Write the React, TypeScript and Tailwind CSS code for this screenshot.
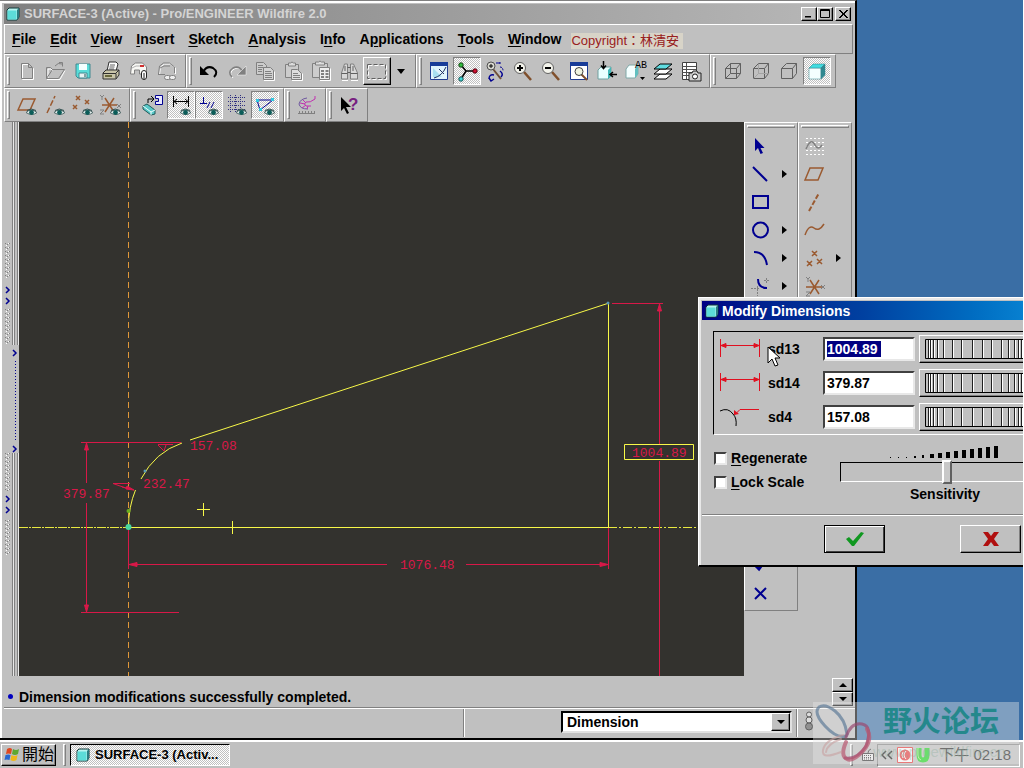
import type { ReactNode } from "react";
import clsx from "clsx";

const raised =
  "border border-t-white border-l-white border-r-black border-b-black shadow-[inset_-1px_-1px_0_#808080]";
const dither =
  "bg-[repeating-conic-gradient(#ffffff_0_25%,#c0c0c0_0_50%)] bg-[length:2px_2px]";

function Icon({ children }: { children: ReactNode }) {
  return (
    <svg
      viewBox="0 0 24 24"
      className="w-6 h-6 shrink-0"
      fill="none"
      stroke="#000"
      aria-hidden="true"
    >
      {children}
    </svg>
  );
}

function Eye() {
  return (
    <g>
      <path d="M11 19.5q5-5 11 0q-5 4-11 0z" fill="#dfeceb" stroke="#506868" />
      <circle cx="16.5" cy="19.5" r="2.4" fill="#0b5c58" stroke="none" />
      <path d="M12 17.5q4-3 9 0" stroke="#305050" />
    </g>
  );
}

function AppCube() {
  return (
    <svg viewBox="0 0 14 14" className="w-3.5 h-3.5 shrink-0" aria-hidden="true">
      <path d="M1 3l2-2h10v9l-2 3h-10z" fill="#b8f4f0" stroke="#103838" />
      <path d="M1.500 3.500h9v9h-9z" fill="#5cdcd8" />
      <path d="M11 3l2-2v9l-2 3z" fill="#2a7c80" />
    </svg>
  );
}

const grey = "#808080";
const brown = "#9a5a30";
const navy = "#000090";

const icons: Record<string, ReactNode> = {
  New: (
    <>
      <path d="M7.500 5.500h7l4 4v11h-11z" stroke="#fff" />
      <path d="M6.500 4.500h7l4 4v11h-11zM13.500 4.500v4h4" stroke={grey} />
    </>
  ),
  Open: (
    <>
      <path d="M4 20.500h13l5-9M5 20v-10h3l2 2" stroke="#fff" />
      <path d="M3.500 19.500h12l6-9h-12l-6 9v-11h4l2 2h6M12 7q3-4 7-2M16 3.500h3.500v4" stroke={grey} />
    </>
  ),
  Save: (
    <>
      <path d="M5 5h14v14h-12l-2-2z" fill="#58dcd8" stroke="#408890" />
      <path d="M8 5h8v6h-8z" fill="#f4ffff" stroke="none" />
      <path d="M8 14h8v5h-8z" fill="#e8f4f4" stroke="#408890" />
      <path d="M14 15v3" stroke="#205058" />
    </>
  ),
  Print: (
    <>
      <path d="M8 12l2-9h7l2 2-2 7" fill="#fff" stroke="#303030" />
      <path d="M11 6h5M10.500 8h5M10 10h5" stroke="#606060" />
      <path d="M4 14l3-3h13v5l-3 4h-13z" fill="#c8c4a8" stroke="#303030" />
      <path d="M4 14.500h13v5M17 14l3-3" stroke="#303030" />
      <path d="M6 17h7" stroke="#68683c" strokeWidth="2" />
    </>
  ),
  Mail: (
    <>
      <path d="M3.500 15l1-8 4-3h7l4 4v7h-7v-4h-5v4z" fill="#f8f8f4" stroke={grey} />
      <path d="M5 9l4-2h6" stroke="#b0b0b0" />
      <path d="M13 6h4v2h-4z" fill="#d03030" stroke="none" />
      <rect x="14.500" y="11.500" width="5" height="9" rx="2.500" fill="#fff" stroke="#202020" />
      <path d="M17 14v6" stroke="#202020" />
    </>
  ),
  Link: (
    <>
      <path d="M4.500 16l1-8 4-3h6l5 4v6" stroke="#fff" />
      <path d="M3.500 15l1-8 4-3h6l5 4v6M5 9l4-2h6M3 15.500h7" stroke={grey} />
      <rect x="9.500" y="16.500" width="6" height="4" rx="2" fill="#eee" stroke={grey} />
      <rect x="14.500" y="16.500" width="6" height="4" rx="2" fill="#eee" stroke={grey} />
    </>
  ),
  Undo: (
    <>
      <path d="M6 13q4-7 10-4q6 4 1 9" strokeWidth="2" />
      <path d="M3 7v9h9z" fill="#000" stroke="none" />
    </>
  ),
  Redo: (
    <>
      <path d="M19 14q-4-7-10-4q-6 4-1 9" stroke="#fff" />
      <path d="M18 13q-4-7-10-4q-6 4-1 9" stroke={grey} strokeWidth="1.500" />
      <path d="M21 7v9h-9z" fill={grey} stroke="#fff" strokeWidth="0.500" />
    </>
  ),
  Copy: (
    <>
      <path d="M3.500 3.500h7l3 3v9h-10z" fill="#ccc" stroke={grey} />
      <path d="M5 6.500h5M5 8.500h6M5 10.500h4M5 12.500h4" stroke={grey} />
      <path d="M10.500 8.500h7l3 3v9h-10z" fill="#d4d4d4" stroke={grey} />
      <path d="M12 12.500h6M12 14.500h7M12 16.500h7M12 18.500h7" stroke={grey} />
      <path d="M11 21.500h10.500v-9" stroke="#fff" />
    </>
  ),
  Paste: (
    <>
      <path d="M4.500 5.500h13v13h-13z" fill="#ccc" stroke={grey} />
      <path d="M7.500 7v-3h2q1.500-2 3 0h2v3z" fill="#ddd" stroke={grey} />
      <path d="M10.500 10.500h6l4 4v6h-10z" fill="#ddd" stroke={grey} />
      <path d="M12 14.500h5M12 16.500h7M12 18.500h7" stroke={grey} />
      <path d="M11 21.500h10.500v-7" stroke="#fff" />
    </>
  ),
  "Paste Special": (
    <>
      <path d="M3.500 4.500h15v14h-15z" fill="#ccc" stroke={grey} />
      <path d="M6.500 6v-3h3q1.500-2 3 0h3v3z" fill="#ddd" stroke={grey} />
      <path d="M10.500 8.500h10v12h-10z" fill="#eee" stroke={grey} />
      <path d="M12 12h3M16.500 12h3M12 15h3M16.500 15h3M12 18h3M16.500 18h3" stroke={grey} strokeWidth="2" />
      <path d="M11 21.500h10.500v-12" stroke="#fff" />
    </>
  ),
  Find: (
    <>
      <path d="M4.500 20v-6l3-9h3v15zM13.500 20v-15h3l4 9v6z" fill="#d8d8d8" stroke={grey} />
      <path d="M10.500 8.500h3M10.500 13.500h3M4.500 14.500h6M13.500 14.500h7M8 7v5M16 7v5" stroke="#606060" />
      <path d="M5 21.500h6M14 21.500h7" stroke="#fff" />
    </>
  ),
  Select: (
    <>
      <path d="M3.500 6.500h18v14h-18z" stroke="#fff" strokeDasharray="4 2" />
      <path d="M2.500 5.500h18v14h-18z" stroke="#606060" strokeDasharray="4 2" />
    </>
  ),
  Sketch: (
    <>
      <path d="M3.500 3.500h17v17h-17z" fill="#e0f4fc" stroke="#203c90" />
      <path d="M3 3h18v4h-18z" fill="#183c98" stroke="none" />
      <path d="M6 9l9 9h-9z" fill="#a8e0f0" stroke="none" />
      <path d="M7 19q8-2 12-11M12 10l5 5" stroke="#203060" />
    </>
  ),
  "Spin Center": (
    <>
      <path d="M6 6l5 6h9M11 12l-5 8" strokeWidth="1.500" />
      <circle cx="6" cy="6" r="2.200" fill="#30c040" stroke="#104010" />
      <circle cx="20" cy="12" r="2.200" fill="#d01030" stroke="#500010" />
      <circle cx="6" cy="20" r="2.200" fill="#40d8d8" stroke="#105050" />
    </>
  ),
  Orient: (
    <>
      <path d="M10 10l8 10" stroke="#705038" strokeWidth="2" />
      <circle cx="8" cy="7" r="4" fill="#d8d8d0" stroke="#505050" />
      <path d="M6 7h4M8 5v4" />
      <path d="M13 4h6M17 8q3 0 3 4M16 3v3" stroke={navy} strokeDasharray="2 1" />
      <path d="M6 20q0-5 5-4M11 20l-3 2-2-3M17 12q4 3 1 6" stroke={navy} strokeWidth="1.500" />
    </>
  ),
  "Zoom In": (
    <>
      <path d="M13 13l7 8" stroke="#80502c" strokeWidth="2.500" />
      <circle cx="9" cy="9" r="5.500" fill="#f4f4ec" stroke="#606060" />
      <path d="M6 9h6M9 6v6" strokeWidth="2" />
    </>
  ),
  "Zoom Out": (
    <>
      <path d="M13 13l7 8" stroke="#80502c" strokeWidth="2.500" />
      <circle cx="9" cy="9" r="5.500" fill="#f4f4ec" stroke="#606060" />
      <path d="M6 9h6" strokeWidth="2" />
    </>
  ),
  Refit: (
    <>
      <path d="M3.500 3.500h17v17h-17z" fill="#fff" stroke="#203c90" />
      <path d="M3 3h18v4h-18z" fill="#183c98" stroke="none" />
      <path d="M14 15l6 6" stroke="#80502c" strokeWidth="2" />
      <circle cx="12" cy="12.500" r="4" fill="#f0f4e0" stroke="#404040" />
    </>
  ),
  Reorient: (
    <>
      <path d="M3 11l3-3h10v9l-3 3h-10z" fill="#e8ffff" stroke="#70a0a0" />
      <path d="M13 11l3-3v9l-3 3z" fill="#40b8b8" stroke="none" />
      <path d="M8.500 2v7M6 6.500l2.500 3 2.500-3M22 15.500h-7M18 13l-3 2.500 3 2.500" strokeWidth="1.500" />
    </>
  ),
  "Saved View List": (
    <>
      <path d="M3 10l3-4h9v9l-3 4h-9z" fill="#f4ffff" stroke="#80a8a8" />
      <path d="M12 10l3-4v9l-3 4z" fill="#60c0c0" stroke="none" />
      <path d="M17 18h5l-2.500 3z" fill="#000" stroke="none" />
      <text x="12" y="9" fontSize="10" fontWeight="normal" fill="#000" stroke="none" fontFamily="Liberation Mono, monospace">
        AB
      </text>
    </>
  ),
  Layers: (
    <>
      <path d="M3 20l6-5h12l-6 5z" fill="#fff" />
      <path d="M3 15l6-5h12l-6 5z" fill="#fff" />
      <path d="M3 10l6-5h12l-6 5z" fill="#60dce0" />
    </>
  ),
  "View Manager": (
    <>
      <path d="M3.500 3.500h14v17h-14z" fill="#fff" stroke="#404040" />
      <path d="M3 7.500h14M3 10.500h14M3 13.500h14M3 16.500h14M7.500 4v16" stroke="#505050" />
      <path d="M10 14h3l1-2h4l1 2h3v8h-12z" fill="#ccc" stroke="#202020" />
      <circle cx="16" cy="17.500" r="2.500" fill="#fff" stroke="#202020" />
    </>
  ),
  Wireframe: (
    <path
      d="M4.500 9.500h11v10h-11zM9.500 4.500h10v10h-10zM4.500 9.500l5-5M15.500 9.500l4-5M4.500 19.500l5-5M15.500 19.500l4-5"
      stroke="#606060"
    />
  ),
  "Hidden Line": (
    <g stroke="#606060">
      <path d="M4.500 9.500h11v10h-11zM4.500 9.500l5-5h10v10l-4 5M15.500 9.500l4-5" />
      <path d="M9.500 5v9.500h10M9.500 14.500l-5 5" stroke="#a4a4a4" />
    </g>
  ),
  "No Hidden": (
    <path d="M4.500 9.500h11v10h-11zM4.500 9.500l5-5h10v10l-4 5M15.500 9.500l4-5" stroke="#606060" />
  ),
  Shading: (
    <g stroke="#308088" strokeWidth="0.500">
      <path d="M4 9h12v11h-12z" fill="#f4ffff" />
      <path d="M4 9l4-4h12l-4 4z" fill="#40dce0" />
      <path d="M16 9l4-4v11l-4 4z" fill="#308890" />
    </g>
  ),
  "Datum Planes": (
    <>
      <path d="M3 17l5-11h12l-5 11z" stroke={brown} strokeWidth="1.500" />
      <Eye />
    </>
  ),
  "Datum Axes": (
    <>
      <path d="M4 20l8-17" stroke={brown} strokeWidth="1.500" strokeDasharray="6 2" />
      <Eye />
    </>
  ),
  "Datum Points": (
    <>
      <path d="M5 3l4 4m0-4l-4 4M14 7l4 4m0-4l-4 4M2 12l4 4m0-4l-4 4" stroke={brown} strokeWidth="1.500" />
      <Eye />
    </>
  ),
  "Coordinate Systems": (
    <>
      <path d="M3 12h15M6 5l9 14M15 5l-9 14" stroke={brown} strokeWidth="1.500" />
      <path d="M1 2l2 2 2-2M3 4v3M1 17h4l-4 4h4M18 11l4 4m0-4l-4 4" stroke={grey} />
      <Eye />
    </>
  ),
  "Sketch Orientation": (
    <>
      <path d="M14.500 2.500h7v9h-7v-3h3v-3h-3z" stroke={navy} fill="#e8e8ff" />
      <path d="M7 10v-4h5M10 3l3 3-3 3" />
      <path d="M2 13l4-2 8 6v4l-4 1-8-6z" fill="#58c8c8" stroke="#205858" />
      <path d="M2 13l8 6 4-2M10 19v3" stroke="#f0ffff" />
    </>
  ),
  Dimensions: (
    <>
      <path d="M4.500 3v11M19.500 3v11M5 8.500h14M8 6l-3 2.500 3 2.500M16 6l3 2.500-3 2.500" />
      <Eye />
    </>
  ),
  Constraints: (
    <>
      <path d="M3 10.500h7M6.500 4v6M10 15l3-6M14 15l3-6" stroke={navy} />
      <Eye />
    </>
  ),
  Grid: (
    <>
      <path
        d="M3 4.500h18M3 8.500h18M3 12.500h18M3 16.500h18M5.500 2v18M10.500 2v18M15.500 2v18"
        stroke="#303080"
        strokeDasharray="1 1"
      />
      <Eye />
    </>
  ),
  Vertices: (
    <>
      <path d="M4 7h16M4 7l3 10 13-10" stroke={navy} />
      <path d="M3 6h3v3h-3zM18 5h3v3h-3zM6 15h3v3h-3z" fill="#30c8e0" stroke="none" />
      <Eye />
    </>
  ),
  Curvature: (
    <>
      <path d="M12 5q-7 1-8 6q1 5 9 5" stroke="#7058a0" />
      <path d="M20 3v3q-5 4-9 3q-3 2 0 4h5M8 7l3 3M5 10l5 1M7 15l4-3M12 16l1-3" stroke="#c030b0" />
      <path d="M3 20.500h17M4.500 18v2M7.500 18v2M10.500 18v2M13.500 18v2M16.500 18v2M19.500 18v2" stroke={grey} />
    </>
  ),
  "Context Help": (
    <>
      <path d="M4 4v14l3-3 3 6 2-1-3-6h5z" fill="#000" stroke="none" />
      <text x="11" y="17" fontSize="17" fontWeight="bold" fill="#782080" stroke="none" fontFamily="Liberation Sans, sans-serif">
        ?
      </text>
    </>
  ),
  Pointer: <path d="M7 4v13l3-3 2.500 6 2.500-1-2.500-5h4z" fill={navy} stroke="none" />,
  Line: <path d="M5 5l14 14" stroke={navy} strokeWidth="2" />,
  Rectangle: <path d="M5 6h15v12h-15z" stroke={navy} strokeWidth="2" />,
  Circle: <circle cx="12.500" cy="12" r="7.500" stroke={navy} strokeWidth="2" />,
  Arc: <path d="M6 6q11 0 13 13" stroke={navy} strokeWidth="2" />,
  Fillet: (
    <>
      <path d="M10 5q0 9 9 9" stroke={navy} strokeWidth="2" />
      <path d="M3 14.500h8M9.500 12v10M16 6.500h6M18.500 4v5" stroke={grey} strokeDasharray="2 1" />
    </>
  ),
  Done: <path d="M7 11l4 4 5-7" stroke={navy} strokeWidth="3" />,
  Quit: <path d="M7 6l11 11M18 6l-11 11" stroke={navy} strokeWidth="2" />,
  "Sketch Tool": (
    <>
      <path
        d="M4 4.500h18M4 8.500h18M4 12.500h18M4 16.500h18M4 20.500h18"
        stroke="#fff"
        strokeDasharray="2 2"
      />
      <path d="M4 15q5-12 9-4q3 6 7 0" stroke={grey} strokeWidth="1.500" />
    </>
  ),
  Plane: <path d="M3 18l5-12h13l-5 12z" stroke={brown} strokeWidth="1.500" />,
  Axis: <path d="M7 21l10-18" stroke={brown} strokeWidth="2" strokeDasharray="5 2" />,
  Curve: <path d="M3 17q4-11 9-7q5 4 10-4" stroke={brown} strokeWidth="1.500" />,
  Point: (
    <path d="M10 5l5 5m0-5l-5 5M5 15l5 5m0-5l-5 5M15 13l5 5m0-5l-5 5" stroke={brown} strokeWidth="1.500" />
  ),
  "Coordinate System": (
    <>
      <path d="M4 13h16M8 6l9 14M17 6l-9 14" stroke={brown} strokeWidth="1.500" />
      <path d="M4 3l2 2 2-2M6 5v3M4 18h4l-4 4h4M19 11l4 4m0-4l-4 4" stroke={grey} />
    </>
  ),
};

const pressed = ["Spin Center", "Shading", "Dimensions", "Constraints", "Vertices"];

function ToolButton({ name }: { name: string }) {
  return (
    <button
      type="button"
      aria-label={name}
      className={clsx(
        "w-7 h-7 flex items-center justify-center",
        pressed.includes(name) &&
          clsx(dither, "border border-t-[#808080] border-l-[#808080] border-r-white border-b-white"),
        name === "Select" && raised,
      )}
    >
      <Icon>{icons[name]}</Icon>
    </button>
  );
}

function ToolGroup({ items, children }: { items: string[]; children?: ReactNode }) {
  return (
    <div className="flex items-center pl-0.5 pr-1 border border-t-white border-l-white border-r-[#808080] border-b-[#808080]">
      <div className="w-[3px] h-7 mr-[3px] border border-t-white border-l-white border-r-[#808080] border-b-[#808080]" />
      {items.map((name) => (
        <ToolButton key={name} name={name} />
      ))}
      {children}
    </div>
  );
}

const menus = [
  ["", "F", "ile"],
  ["", "E", "dit"],
  ["", "V", "iew"],
  ["", "I", "nsert"],
  ["", "S", "ketch"],
  ["", "A", "nalysis"],
  ["I", "n", "fo"],
  ["A", "p", "plications"],
  ["", "T", "ools"],
  ["", "W", "indow"],
];

function SideTools({ items, flyouts, className }: { items: string[]; flyouts: string[]; className?: string }) {
  return (
    <div
      className={clsx(
        "w-[54px] pt-[2px] border border-t-white border-l-white border-r-[#808080] border-b-[#808080]",
        className,
      )}
    >
      <div className="h-[3px] mx-0.5 mb-1 border border-t-white border-l-white border-r-[#808080] border-b-[#808080]" />
      {items.map((name, i) => (
        <div key={i} className="h-7 flex items-center pl-[3px]">
          {name && (
            <button type="button" aria-label={name}>
              <Icon>{icons[name]}</Icon>
            </button>
          )}
          {flyouts.includes(name) && (
            <svg viewBox="0 0 5 8" className="ml-2.5 w-[5px] h-2" aria-hidden="true">
              <path d="M0 0l5 4-5 4z" />
            </svg>
          )}
        </div>
      ))}
    </div>
  );
}

function Sash() {
  return (
    <svg
      viewBox="4 122 15 554"
      preserveAspectRatio="xMinYMin slice"
      className="w-[15px] h-full shrink-0"
      fill="none"
      aria-hidden="true"
    >
      <path d="M12.500 122v554M14.500 122v554M17.500 122v554" stroke="#808080" />
      <path d="M13.500 122v554M18.500 122v554" stroke="#e8e8e8" />
      <path d="M12 345h7v108h-7z" fill="#c0c0c0" />
      <path
        d="M5.500 243v36M7.500 244v35M9.500 243v36M5.500 309v36M7.500 310v35M9.500 309v36M5.500 453v38M7.500 454v37M9.500 453v38M5.500 520v36M7.500 521v35M9.500 520v36"
        stroke="#808080"
        strokeDasharray="1 3"
      />
      <path
        d="M6.500 245v34M8.500 243v36M6.500 311v34M8.500 309v36M6.500 455v36M8.500 453v38M6.500 522v34M8.500 520v36"
        stroke="#fff"
        strokeDasharray="1 3"
      />
      <path d="M15.500 361v80" stroke={navy} strokeDasharray="1 2" />
      <path
        d="M6 287l3 3-3 3M6 298l3 3-3 3M13 350l3 3-3 3M13 446l3 3-3 3M6 496l3 3-3 3M6 507l3 3-3 3"
        stroke={navy}
        strokeWidth="1.500"
      />
    </svg>
  );
}

function SketchCanvas() {
  return (
    <div className="flex-1 min-w-0 bg-[#33322e] overflow-hidden">
      <svg
        viewBox="19 122 725 554"
        preserveAspectRatio="xMinYMin slice"
        className="block w-full h-full"
        fill="none"
      >
        <path d="M128.500 122v554" stroke="#e09838" strokeDasharray="6 4" />
        <path d="M19 527.500h109" stroke="#e8e840" strokeDasharray="9 1 2 1" />
        <path d="M608 527.500h136" stroke="#e8e840" strokeDasharray="9 2 2 2" />

        <g stroke="#d81848">
          <path d="M81 442.500h100M86.500 443v40M86.500 503v109M81 612.500h98" />
          <path d="M128.500 528v41M129 564.500h258M466 564.500h142M608.500 528v41" />
          <path d="M612 303.500h51M659.500 304v140M659.500 461v215" />
          <path d="M113 483.500h17M113 483.500l17 6M122 487l12 3M158 444.500h15M158 445l6 6 2-6" />
          <path d="M138 527.500h10" />
          <g fill="#d81848">
            <path d="M84.500 450l2-7 2 7zM84.500 605l2 7 2-7z" />
            <path d="M129 564.500l8-2v4zM608 564.500l-8-2v4z" />
            <path d="M657.500 311l2-7 2 7zM134 490l-7-4-1 3z" />
          </g>
        </g>

        <g stroke="#f8f848">
          <path d="M190 440L609 303M608.500 303v224M128 527.500h481" />
          <path d="M128.500 527q0-20 7-37M141 479q14-27 41-36" />
          <path d="M197 509.500h13M203.500 503v13M232.500 521v13" />
          <path d="M624.500 444.500h69v15h-69z" />
        </g>
        <circle cx="128.500" cy="527" r="3" fill="#48d8a0" />
        <circle cx="128.500" cy="511" r="2" fill="#68b020" />
        <circle cx="145" cy="471" r="1.500" fill="#5898b8" />
        <circle cx="608" cy="303" r="1.500" fill="#5898b8" />

        <g
          fill="#d81848"
          fontFamily="Liberation Mono, monospace"
          fontSize="13"
          fontWeight="normal"
        >
          <text x="190" y="450">157.08</text>
          <text x="143" y="488">232.47</text>
          <text x="63" y="498">379.87</text>
          <text x="400" y="569">1076.48</text>
          <text x="632" y="457">1004.89</text>
        </g>
      </svg>
    </div>
  );
}

function TitleButton({ label, path }: { label: string; path: string }) {
  return (
    <button type="button" aria-label={label} className={clsx("w-4 h-3.5 bg-[#c0c0c0]", raised)}>
      <svg viewBox="0 0 14 12" className="w-3.5 h-3" fill="none" stroke="#000" aria-hidden="true">
        <path d={path} />
      </svg>
    </button>
  );
}

function MainWindow() {
  return (
    <main className="h-full flex flex-col bg-[#c0c0c0] border-t border-t-[#808080] border-r-2 border-r-black border-b-2 border-b-black">
      <div className="flex-1 min-h-0 flex flex-col border-t-2 border-l-2 border-white pt-px pl-0.5">
        <header className="h-5 mr-0.5 px-0.5 flex items-center gap-1 bg-linear-to-r from-[#808080] to-[#b8b8b8]">
          <AppCube />
          <h1 className="text-[13px] text-[#d4d4d4] whitespace-nowrap">
            SURFACE-3 (Active) - Pro/ENGINEER Wildfire 2.0
          </h1>
          <div className="ml-auto flex">
            <TitleButton label="Minimize" path="M3 9h6M3 8.500h6" />
            <TitleButton label="Maximize" path="M2.500 1.500h9v8h-9zM2 2.500h9" />
            <div className="ml-0.5 flex">
              <TitleButton label="Close" path="M3 2l8 8M4 2l8 8M11 2l-8 8M12 2l-8 8" />
            </div>
          </div>
        </header>

        <nav className="h-[30px] mr-0.5 pl-[7px] flex items-center gap-3.5 border border-t-white border-l-white border-r-[#808080] border-b-[#808080]">
          {menus.map(([before, key, after]) => (
            <button type="button" key={key + after}>
              {before}
              <u className="underline-offset-2">{key}</u>
              {after}
            </button>
          ))}
          <span className="-ml-1 mt-1 pr-1 leading-4 text-[13px] font-normal text-[#982020] bg-[#d8d4c8] whitespace-nowrap">
            Copyright：林清安
          </span>
        </nav>

        <div className="h-[34px] flex">
          <ToolGroup items={["New", "Open", "Save", "Print", "Mail", "Link"]} />
          <ToolGroup items={["Undo", "Redo", "Copy", "Paste", "Paste Special", "Find", "Select"]}>
            <button type="button" aria-label="Selection filter" className="w-5 flex justify-center">
              <svg viewBox="0 0 8 5" className="w-2 h-[5px]" aria-hidden="true">
                <path d="M0 0h8l-4 5z" />
              </svg>
            </button>
          </ToolGroup>
          <ToolGroup
            items={[
              "Sketch",
              "Spin Center",
              "Orient",
              "Zoom In",
              "Zoom Out",
              "Refit",
              "Reorient",
              "Saved View List",
              "Layers",
              "View Manager",
            ]}
          />
          <ToolGroup items={["Wireframe", "Hidden Line", "No Hidden", "Shading"]} />
        </div>
        <div className="h-[34px] flex">
          <ToolGroup items={["Datum Planes", "Datum Axes", "Datum Points", "Coordinate Systems"]} />
          <ToolGroup items={["Sketch Orientation", "Dimensions", "Constraints", "Grid", "Vertices"]} />
          <ToolGroup items={["Curvature"]} />
          <ToolGroup items={["Context Help"]} />
        </div>

        <div className="flex-1 min-h-0 flex pr-[3px]">
          <Sash />
          <SketchCanvas />
          <div className="flex items-start">
            <SideTools
              items={["Pointer", "Line", "Rectangle", "Circle", "Arc", "Fillet", "", "", "", "", "", "", "", "", "", "Done", "Quit"]}
              flyouts={["Line", "Circle", "Arc", "Fillet"]}
              className="pb-0.5"
            />
            <SideTools
              items={["Sketch Tool", "Plane", "Axis", "Curve", "Point", "Coordinate System"]}
              flyouts={["Point"]}
              className="pb-10"
            />
          </div>
        </div>

        <div className="h-8 pl-1 pr-0.5 flex items-center justify-between border-b border-b-[#808080]">
          <p className="pt-2.5 flex items-center gap-1.5">
            <span className="w-[5px] h-[5px] rounded-full bg-[#0000c0]" />
            Dimension modifications successfully completed.
          </p>
          <div className="flex flex-col">
            <button type="button" aria-label="Scroll up" className={clsx("w-[21px] h-3.5 flex items-center justify-center", raised)}>
              <svg viewBox="0 0 8 4" className="w-2 h-1" aria-hidden="true">
                <path d="M0 4h8l-4-4z" />
              </svg>
            </button>
            <button type="button" aria-label="Scroll down" className={clsx("w-[21px] h-3.5 flex items-center justify-center", raised)}>
              <svg viewBox="0 0 8 4" className="w-2 h-1" aria-hidden="true">
                <path d="M0 0h8l-4 4z" />
              </svg>
            </button>
          </div>
        </div>

        <div className="h-[30px] flex items-start border-t border-t-white">
          <div className="flex-1 h-7 border-r border-r-[#808080]" />
          <div className="h-7 pl-24 pr-1 pt-0.5 border-l border-l-white border-r border-r-[#808080]">
            <div className="relative">
              <select
                aria-label="Selection filter"
                defaultValue="Dimension"
                className="block appearance-none w-[231px] h-[22px] pl-1 leading-4 bg-white border-2 border-t-black border-l-black border-r-[#e0e0e0] border-b-[#e0e0e0]"
              >
                <option>Dimension</option>
              </select>
              <span className={clsx("absolute right-0.5 top-0.5 w-[19px] h-[18px] flex items-center justify-center bg-[#c0c0c0] pointer-events-none", raised)}>
                <svg viewBox="0 0 8 4" className="w-2 h-1" aria-hidden="true">
                  <path d="M0 0h8l-4 4z" />
                </svg>
              </span>
            </div>
          </div>
          <div className="h-7 w-[58px] pl-1.5 pt-0.5 border-l border-l-white">
            <svg viewBox="0 0 10 20" className="w-2.5 h-5" stroke="#606060" aria-hidden="true">
              <circle cx="5" cy="3.500" r="2.500" fill="#ddd" />
              <circle cx="5" cy="9" r="3" fill="#ddd" />
              <circle cx="5" cy="15.500" r="3.500" fill="#909090" />
            </svg>
          </div>
        </div>
      </div>
    </main>
  );
}

function LinearIcon() {
  return (
    <svg viewBox="0 0 40 20" className="w-10 h-5 shrink-0" fill="none" stroke="#e01020" aria-hidden="true">
      <path d="M0.500 0v18M39.500 0v18M1 6.500h38" />
      <path d="M1 6.500l5-2v4zM39 6.500l-5-2v4z" fill="#e01020" />
    </svg>
  );
}

function RadialIcon() {
  return (
    <svg viewBox="0 0 40 20" className="w-10 h-5 shrink-0" fill="none" aria-hidden="true">
      <path d="M0 4q8-4 13 3q4 4 3 12" stroke="#000" />
      <path d="M39 2.500h-19l-5 5" stroke="#e01020" />
      <path d="M14 8v-5l5 4z" fill="#e01020" />
    </svg>
  );
}

const wheelLines = [3, 5, 8, 12, 18, 27, 36, 47, 57, 66, 76, 83, 89, 93, 96, 99];

function Thumbwheel({ label }: { label: string }) {
  return (
    <button type="button" aria-label={label} className={clsx("w-[112px] h-7 shrink-0 pl-[5px]", raised)}>
      <svg viewBox="0 0 106 20" className="w-[106px] h-5" fill="none" aria-hidden="true">
        {wheelLines.map((x) => (
          <g key={x}>
            <path d={`M${x + 0.5} 1v18`} stroke="#202020" />
            <path d={`M${x + 1.5} 1v18`} stroke="#fff" />
          </g>
        ))}
        <path d="M0.500 0.500h105v19h-105z" stroke="#000" />
      </svg>
    </button>
  );
}

const dimensions = [
  { name: "sd13", value: "1004.89", icon: <LinearIcon /> },
  { name: "sd14", value: "379.87", icon: <LinearIcon /> },
  { name: "sd4", value: "157.08", icon: <RadialIcon /> },
];

const bars = [1, 1, 1, 2, 3, 4, 5, 6, 7, 8, 9, 10, 11, 12];

function ModifyDimensions() {
  return (
    <section
      aria-label="Modify Dimensions"
      className="absolute left-[698px] right-0 top-[297px] h-[270px] flex flex-col overflow-hidden bg-[#c0c0c0] border-t border-l border-white border-b-2 border-b-black pt-[3px] pl-[3px] shadow-[inset_2px_2px_0_#e8e8e8]"
    >
      <header className="h-[19px] shrink-0 px-[3px] flex items-center gap-[3px] bg-linear-to-r from-[#000084] via-[#0040a0] to-[#0880d0] text-white">
        <AppCube />
        <h2>Modify Dimensions</h2>
      </header>

      <div className="mt-[11px] ml-[11px] border border-t-black border-l-black border-b-white border-r-0">
        {dimensions.map(({ name, value, icon }) => (
          <div key={name} className="h-[34px] pl-1.5 flex items-center">
            {icon}
            <label htmlFor={name} className="w-[63px] shrink-0 pl-2 leading-4">
              {name}
            </label>
            <div className="w-[92px] h-6 shrink-0 mr-1 flex items-center bg-white border-2 border-t-[#404040] border-l-[#404040] border-r-[#e8e8e8] border-b-[#e8e8e8]">
              <input
                id={name}
                defaultValue={value}
                className={clsx(
                  "h-4 ml-0.5 outline-none",
                  name === "sd13" ? "w-[54px] bg-[#000080] text-white" : "w-20",
                )}
              />
            </div>
            <Thumbwheel label={`${name} wheel`} />
          </div>
        ))}
      </div>

      <div className="mt-[11px] pl-3 flex">
        <div className="w-[126px] shrink-0">
          {["Regenerate", "Lock Scale"].map((text) => (
            <label key={text} className="h-6 flex items-center gap-1 whitespace-nowrap">
              <input
                type="checkbox"
                className="appearance-none w-[13px] h-[13px] bg-white border-2 border-t-[#404040] border-l-[#404040] border-r-[#e8e8e8] border-b-[#e8e8e8]"
              />
              <span>
                <u className="underline-offset-2">{text[0]}</u>
                {text.slice(1)}
              </span>
            </label>
          ))}
        </div>
        <div className="w-[210px] shrink-0 flex flex-col">
          <svg viewBox="0 0 210 12" className="w-[210px] h-3" aria-hidden="true">
            {bars.map((h, i) => (
              <rect key={i} x={50 + i * 8} y={12 - h} width={h > 3 ? 4 : h > 1 ? 2 : 1} height={h} />
            ))}
          </svg>
          <input
            id="sensitivity"
            type="range"
            min="0"
            max="100"
            defaultValue="51"
            className="mt-0.5 h-6 appearance-none bg-transparent [&::-webkit-slider-runnable-track]:h-5 [&::-webkit-slider-runnable-track]:border [&::-webkit-slider-runnable-track]:border-black [&::-webkit-slider-runnable-track]:border-b-white [&::-webkit-slider-thumb]:appearance-none [&::-webkit-slider-thumb]:w-2.5 [&::-webkit-slider-thumb]:h-6 [&::-webkit-slider-thumb]:-mt-[3px] [&::-webkit-slider-thumb]:bg-[#c8c8c8] [&::-webkit-slider-thumb]:border-2 [&::-webkit-slider-thumb]:border-t-white [&::-webkit-slider-thumb]:border-l-white [&::-webkit-slider-thumb]:border-r-[#606060] [&::-webkit-slider-thumb]:border-b-[#606060]"
          />
          <label htmlFor="sensitivity" className="text-center leading-5">
            Sensitivity
          </label>
        </div>
      </div>

      <footer className="mt-2.5 pt-2.5 pl-[122px] flex gap-[75px] border-t border-t-[#808080] shadow-[inset_0_1px_0_#fff]">
        <button
          type="button"
          aria-label="Accept"
          className="w-[61px] h-7 shrink-0 flex items-center justify-center border border-black shadow-[inset_1px_1px_0_#fff,inset_-1px_-1px_0_#404040]"
        >
          <svg viewBox="0 0 18 14" className="w-[18px] h-3.5" aria-hidden="true">
            <path d="M0 7l3-2 4 4 8-9 3 1-10 13h-2z" fill="#109820" />
          </svg>
        </button>
        <button type="button" aria-label="Cancel" className={clsx("w-[61px] h-7 shrink-0 flex items-center justify-center", raised)}>
          <svg viewBox="0 0 16 14" className="w-4 h-3.5" aria-hidden="true">
            <path d="M0 0h5l3 4 3-4h5l-5 7 5 7h-5l-3-4-3 4h-5l5-7z" fill="#b01010" />
          </svg>
        </button>
      </footer>

      <svg viewBox="0 0 14 22" className="absolute left-[68px] top-[48px] w-3.5 h-[22px]" aria-hidden="true">
        <path d="M1 1v16l4-4 3 7 3-1-3-7h5z" fill="#fff" stroke="#000" />
      </svg>
    </section>
  );
}

function Taskbar() {
  return (
    <footer className="h-7 shrink-0 pl-px pr-[3px] flex items-center bg-[#c0c0c0] border-t-2 border-white">
      <button type="button" className={clsx("w-[55px] h-[22px] pl-0.5 flex items-center gap-0.5 font-normal text-[16px] leading-5", raised)}>
        <svg viewBox="0 0 16 16" className="w-4 h-4 shrink-0" aria-hidden="true">
          <path d="M3 2q3-2 5 0l-1 5q-3-1-5 0z" fill="#e04820" />
          <path d="M9 2q3 2 6 0l-1 5q-3 2-6 0z" fill="#60a830" />
          <path d="M1.500 8q3-1 5 0l-1 5q-3-1-5 0z" fill="#2868d0" />
          <path d="M7.500 8q3 2 6 0l-1 5q-3 2-6 0z" fill="#f0b818" />
        </svg>
        開始
      </button>
      <div className="ml-[7px] w-[3px] h-[22px] border border-t-white border-l-white border-r-[#808080] border-b-[#808080]" />
      <button
        type="button"
        className={clsx(
          "ml-1 w-40 h-[22px] pl-[5px] flex items-center gap-[5px] text-[13px] whitespace-nowrap border border-t-black border-l-black border-r-white border-b-white",
          dither,
        )}
      >
        <AppCube />
        SURFACE-3 (Activ...
      </button>

      <div className="ml-auto mr-2 w-[3px] h-[22px] border border-t-white border-l-white border-r-[#808080] border-b-[#808080]" />
      <svg viewBox="0 0 14 14" className="mr-0.5 w-3.5 h-3.5" fill="none" stroke="#303030" aria-hidden="true">
        <path d="M1.500 5.500h11v7h-11z" fill="#eee" />
        <path d="M3 7.500h8M3 9.500h8M3 11h8" strokeDasharray="1 1" />
        <path d="M7 5q0-3 3-4" />
      </svg>
      <div className="h-[23px] pl-[3px] pr-2 flex items-center font-normal text-[15px] text-[#202020] border border-t-[#808080] border-l-[#808080] border-r-white border-b-white">
        <svg viewBox="0 0 12 10" className="w-3 h-2.5" fill="none" stroke="#101010" strokeWidth="1.500" aria-hidden="true">
          <path d="M5 1l-4 4 4 4M11 1l-4 4 4 4" />
        </svg>
        <svg viewBox="0 0 16 16" className="ml-1 w-4 h-4" aria-hidden="true">
          <path d="M0.500 0.500h15v15h-15z" fill="#fff" stroke="#e83030" />
          <circle cx="8" cy="8" r="5.500" fill="#e83838" />
          <path d="M9 4q-4 4 0 8M6 5q-2 3 0 6" fill="none" stroke="#fff" />
        </svg>
        <svg viewBox="0 0 16 16" className="ml-0.5 w-4 h-4" fill="none" aria-hidden="true">
          <path d="M4 1v7q0 5 4 5t4-5v-7" stroke="#18d818" strokeWidth="5" />
          <path d="M3 1v7q0 4 3 5" stroke="#a8ff80" />
        </svg>
        <time className="ml-2 whitespace-nowrap">下午 02:18</time>
      </div>
    </footer>
  );
}

function ForumBadge() {
  return (
    <div className="absolute right-1 bottom-1 w-[206px] h-[62px] flex bg-[#e8e8e8]/40 pointer-events-none">
      <svg viewBox="0 0 64 62" className="w-16 h-[62px] shrink-0" fill="none" strokeLinecap="round" aria-hidden="true">
        <path d="M33 34Q24 37 12 24T6 5Q12 1 22 9T34 32" stroke="#607c98" strokeOpacity="0.700" strokeWidth="3" />
        <path d="M33 35Q38 20 49 22T53 44Q44 58 32 56" stroke="#984870" strokeOpacity="0.700" strokeWidth="3" />
        <path d="M54 27Q60 38 50 49T34 57Q27 54 33 40" stroke="#b85870" strokeOpacity="0.700" strokeWidth="4" />
        <path d="M30 33Q12 38 10 48T28 50M28 37Q14 42 13 50" stroke="#c8a0a0" strokeOpacity="0.600" strokeWidth="2" />
      </svg>
      <div className="-ml-1 whitespace-nowrap">
        <p className="pl-2.5 text-[29px] leading-10 text-[#24888c]">野火论坛</p>
        <p className="text-[15px] leading-5 font-normal text-[#90b0a0]/40">www.proewildfire.cn</p>
      </div>
    </div>
  );
}

export default function App() {
  return (
    <div className="relative h-screen flex flex-col overflow-hidden bg-[#3a6ea5] border-r border-white text-[14px] leading-4 font-bold text-black font-['Liberation_Sans','Noto_Sans_CJK_TC',sans-serif]">
      <div className="flex-1 min-h-0 relative pr-[166px]">
        <MainWindow />
        <ModifyDimensions />
      </div>
      <Taskbar />
      <ForumBadge />
    </div>
  );
}
